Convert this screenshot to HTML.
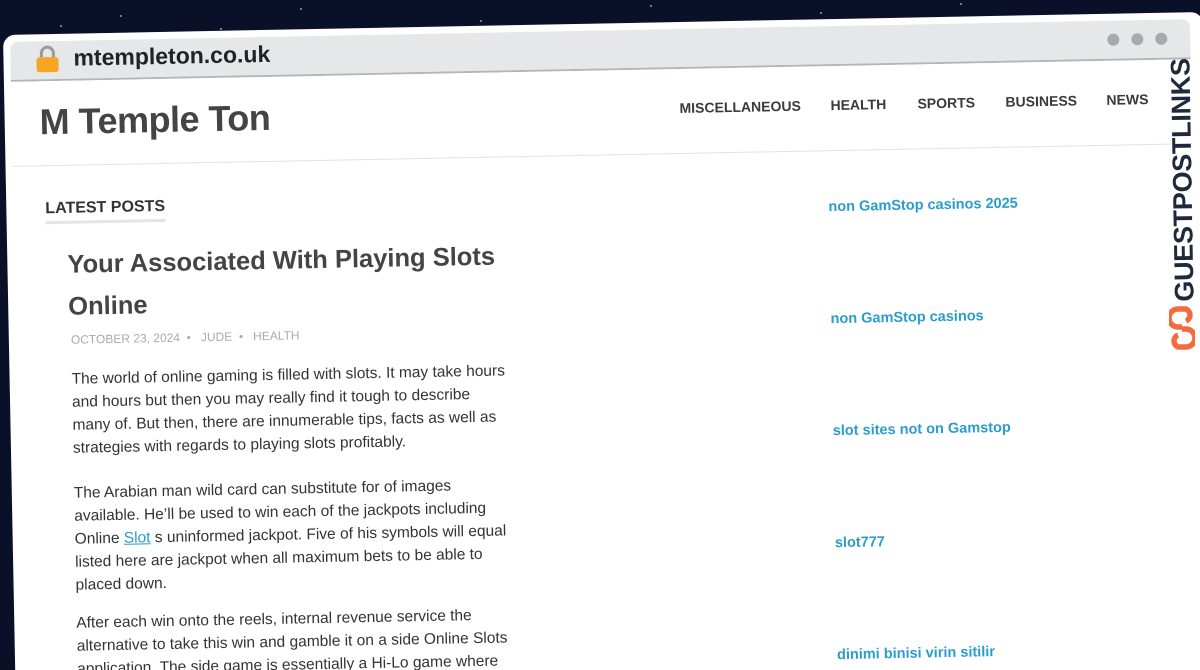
<!DOCTYPE html>
<html><head><meta charset="utf-8"><style>
html,body{margin:0;padding:0;width:1200px;height:670px;overflow:hidden;}
body{background:#0b1029;font-family:"Liberation Sans",sans-serif;}
#wrap{position:relative;width:1200px;height:670px;overflow:hidden;background:#0b1029;}
.star{position:absolute;width:2px;height:2px;background:#cfd6ff;border-radius:50%;opacity:.7}
#win{position:absolute;left:3px;top:35px;width:1200px;height:680px;transform-origin:0 0;transform:rotate(-1.1deg);background:#fff;border-radius:12px;}
#bar{position:absolute;left:7px;top:7px;width:1180px;height:38px;background:#e6e7e9;border-radius:8px 8px 0 0;border-bottom:2px solid #b4b5b8;}
.a{position:absolute;white-space:nowrap;}
.nav{font-weight:bold;font-size:14px;color:#3a3a3a;top:78px;}
.lk{color:#2a9dcc;font-weight:bold;font-size:14.5px;left:822px;}
.p{font-size:15.5px;line-height:23px;color:#333;width:440px;white-space:normal;}
.dot{position:absolute;top:13px;width:12px;height:12px;border-radius:50%;background:#a8a9ac;}
</style></head><body><div id="wrap">
<div class="star" style="left:120px;top:15px"></div><div class="star" style="left:300px;top:8px"></div><div class="star" style="left:480px;top:20px"></div><div class="star" style="left:650px;top:5px"></div><div class="star" style="left:820px;top:12px"></div><div class="star" style="left:60px;top:25px"></div><div class="star" style="left:960px;top:3px"></div><div class="star" style="left:220px;top:28px"></div>
<div id="win">
 <div id="bar">
  <div class="dot" style="left:1097px"></div><div class="dot" style="left:1121px"></div><div class="dot" style="left:1145px"></div>
 </div>
 <svg class="a" style="left:32px;top:11px" width="24" height="28" viewBox="0 0 24 28"><path d="M6 12V8a6 6 0 0 1 12 0v4" fill="none" stroke="#9a9a9a" stroke-width="3"/><rect x="1" y="12" width="22" height="15" rx="3" fill="#f5a623"/></svg>
 <div class="a" style="left:70px;top:11px;font-size:23px;font-weight:bold;color:#222">mtempleton.co.uk</div>
 <div class="a" style="left:35px;top:67px;font-size:36px;font-weight:bold;color:#444;letter-spacing:-0.5px">M Temple Ton</div>
 <div class="a nav" style="left:675px">MISCELLANEOUS</div>
 <div class="a nav" style="left:826px">HEALTH</div>
 <div class="a nav" style="left:913px">SPORTS</div>
 <div class="a nav" style="left:1001px">BUSINESS</div>
 <div class="a nav" style="left:1102px">NEWS</div>
 <div class="a" style="left:7px;top:131px;width:1180px;height:1px;background:#e2e2e2"></div>
 <div class="a" style="left:39px;top:166px;font-size:16px;font-weight:bold;color:#333;border-bottom:3px solid #e5e5e5;padding-bottom:3px">LATEST POSTS</div>
 <div class="a" style="left:60px;top:210px;font-size:25.5px;font-weight:bold;color:#444;line-height:42px;width:470px;white-space:normal">Your Associated With Playing Slots Online</div>
 <div class="a" style="left:62px;top:299px;font-size:12px;color:#aaa">OCTOBER 23, 2024 &nbsp;•&nbsp;&nbsp; JUDE &nbsp;•&nbsp;&nbsp; HEALTH</div>
 <div class="a p" style="left:62px;top:334px">The world of online gaming is filled with slots. It may take hours and hours but then you may really find it tough to describe many of. But then, there are innumerable tips, facts as well as strategies with regards to playing slots profitably.</div>
 <div class="a p" style="left:62px;top:448px">The Arabian man wild card can substitute for of images available. He’ll be used to win each of the jackpots including Online <span style="color:#2a9dcc;text-decoration:underline">Slot</span> s uninformed jackpot. Five of his symbols will equal listed here are jackpot when all maximum bets to be able to placed down.</div>
 <div class="a p" style="left:62px;top:578px">After each win onto the reels, internal revenue service the alternative to take this win and gamble it on a side Online Slots application. The side game is essentially a Hi-Lo game where</div>
 <div class="a lk" style="top:180px">non GamStop casinos 2025</div>
 <div class="a lk" style="top:292px">non GamStop casinos</div>
 <div class="a lk" style="top:404px">slot sites not on Gamstop</div>
 <div class="a lk" style="top:516px">slot777</div>
 <div class="a lk" style="top:628px">dinimi binisi virin sitilir</div>
</div>
<div class="a" style="left:1183px;top:180px;transform:translate(-50%,-50%) rotate(-91deg);font-size:27px;font-weight:bold;color:#1e2a3c;letter-spacing:-0.3px">GUESTPOSTLINKS</div>
<svg class="a" style="left:1169px;top:303px" width="26" height="50" viewBox="0 0 26 50"><g fill="none" stroke="#f26a3d" stroke-width="5.5"><path d="M13 24 H9 a6.5 6.5 0 0 1 0-18 h8 a6.5 6.5 0 0 1 0 12"/><path d="M13 26 h4 a6.5 6.5 0 0 1 0 18 h-8 a6.5 6.5 0 0 1 0-12"/></g></svg>
</div></body></html>
